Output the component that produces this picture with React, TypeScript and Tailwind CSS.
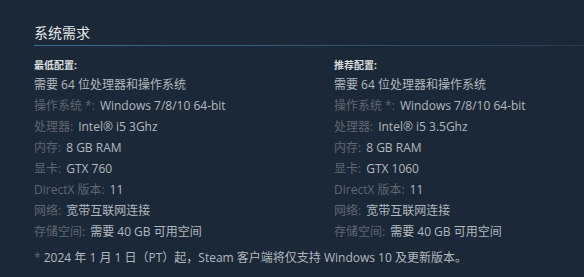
import React from 'react';

type Row = { label?: string; value: string };

const minimum: Row[] = [
  { value: '需要 64 位处理器和操作系统' },
  { label: '操作系统 *:', value: 'Windows 7/8/10 64-bit' },
  { label: '处理器:', value: 'Intel® i5 3Ghz' },
  { label: '内存:', value: '8 GB RAM' },
  { label: '显卡:', value: 'GTX 760' },
  { label: 'DirectX 版本:', value: '11' },
  { label: '网络:', value: '宽带互联网连接' },
  { label: '存储空间:', value: '需要 40 GB 可用空间' },
];

const recommended: Row[] = [
  { value: '需要 64 位处理器和操作系统' },
  { label: '操作系统 *:', value: 'Windows 7/8/10 64-bit' },
  { label: '处理器:', value: 'Intel® i5 3.5Ghz' },
  { label: '内存:', value: '8 GB RAM' },
  { label: '显卡:', value: 'GTX 1060' },
  { label: 'DirectX 版本:', value: '11' },
  { label: '网络:', value: '宽带互联网连接' },
  { label: '存储空间:', value: '需要 40 GB 可用空间' },
];

const Column: React.FC<{ title: string; rows: Row[] }> = ({ title, rows }) => (
  <div className="w-[300px] shrink-0">
    <div className="text-[10px] font-bold text-[#dcdedf] leading-[14px] mb-[2px]">{title}</div>
    <ul>
      {rows.map((r, i) => (
        <li key={i} className="text-[12px] leading-[21px] text-[#b2b8be] whitespace-nowrap">
          {r.label && <span className="text-[#5f6670] mr-[5px]">{r.label}</span>}
          {r.value}
        </li>
      ))}
    </ul>
  </div>
);

const App: React.FC = () => {
  return (
    <div
      className="w-[584px] h-[277px] bg-[#1b2838] pl-[34px] pt-[24px] overflow-hidden"
      style={{ fontFamily: '"Open Sans", "Noto Sans CJK SC", sans-serif' }}
    >
      <h2 className="text-[14px] leading-[18px] text-[#e8e8e8] pb-[3px]">系统需求</h2>
      <div className="h-px bg-gradient-to-r from-[#3b6e8c] to-[#2a3d55]" />
      <div className="flex mt-[12px]">
        <Column title="最低配置:" rows={minimum} />
        <Column title="推荐配置:" rows={recommended} />
      </div>
      <p className="mt-[6px] text-[12px] leading-[20px] text-[#b2b8be] whitespace-nowrap">
        <span className="text-[#5f6670]">*</span> 2024 年 1 月 1 日（PT）起，Steam 客户端将仅支持 Windows 10 及更新版本。
      </p>
    </div>
  );
};

export default App;
